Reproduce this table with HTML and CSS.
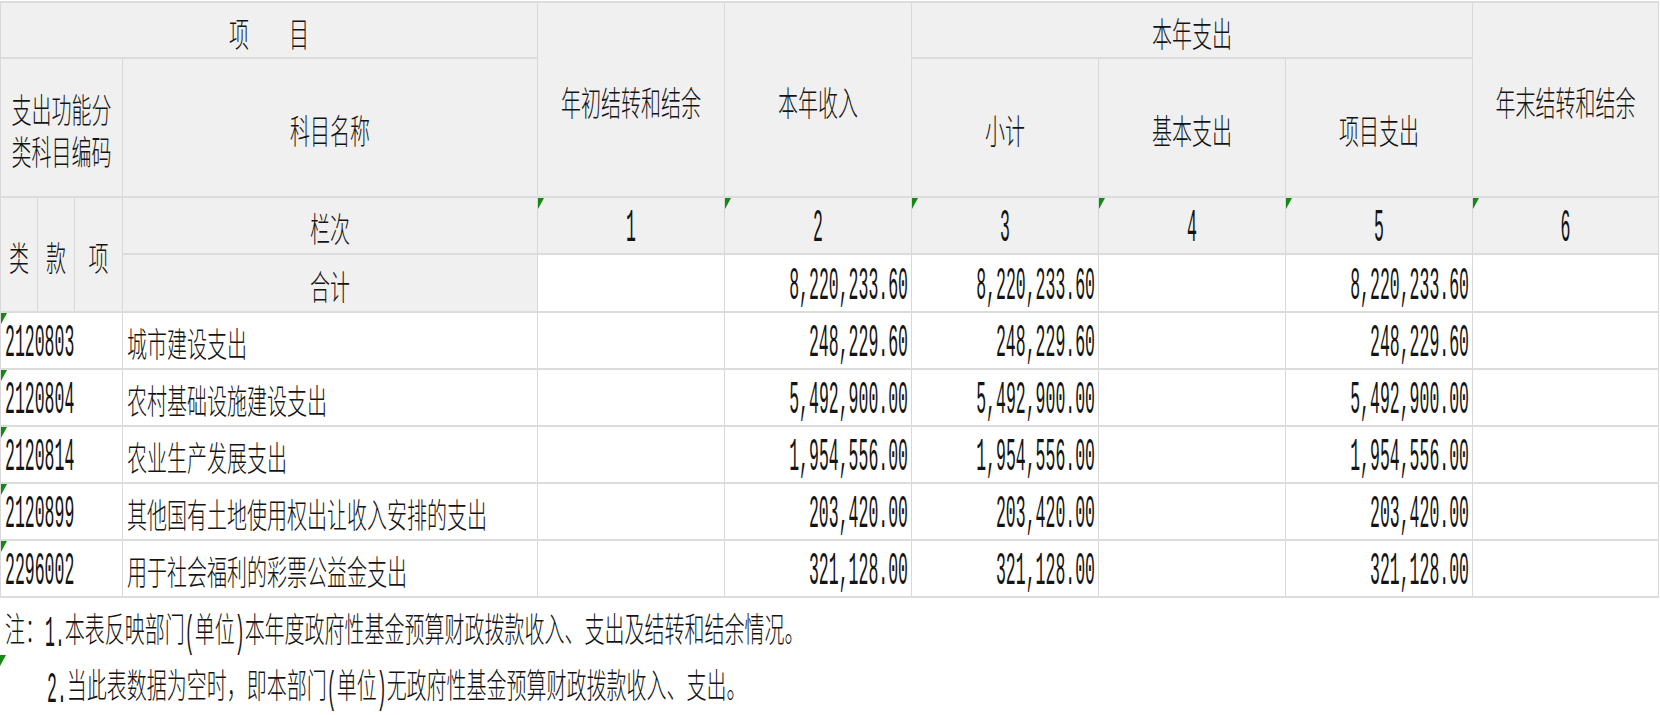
FILE: index.html
```html
<!DOCTYPE html>
<html lang="zh-CN">
<head>
<meta charset="utf-8">
<title>政府性基金预算财政拨款收入支出决算表</title>
<link rel="stylesheet" href="styles.css">
</head>
<body>
<table class="sheet">
  <colgroup>
    <col class="w-lei"><col class="w-kuan"><col class="w-xiang"><col class="w-name">
    <col class="w-val"><col class="w-val"><col class="w-val"><col class="w-val"><col class="w-val"><col class="w-last">
  </colgroup>
  <tbody>
    <tr class="r1">
      <td class="hd" colspan="4"><span class="t">项　　目</span></td>
      <td class="hd" rowspan="2"><span class="t">年初结转和结余</span></td>
      <td class="hd" rowspan="2"><span class="t">本年收入</span></td>
      <td class="hd" colspan="3"><span class="t">本年支出</span></td>
      <td class="hd" rowspan="2"><span class="t">年末结转和结余</span></td>
    </tr>
    <tr class="r2">
      <td class="hd stack" colspan="3"><span class="t">支出功能分</span><br><span class="t">类科目编码</span></td>
      <td class="hd"><span class="t">科目名称</span></td>
      <td class="hd"><span class="t">小计</span></td>
      <td class="hd"><span class="t">基本支出</span></td>
      <td class="hd"><span class="t">项目支出</span></td>
    </tr>
    <tr class="r3">
      <td class="hd" rowspan="2"><span class="t">类</span></td>
      <td class="hd" rowspan="2"><span class="t">款</span></td>
      <td class="hd" rowspan="2"><span class="t">项</span></td>
      <td class="hd"><span class="t">栏次</span></td>
      <td class="hd mk"><span class="n">1</span></td>
      <td class="hd mk"><span class="n">2</span></td>
      <td class="hd mk"><span class="n">3</span></td>
      <td class="hd mk"><span class="n">4</span></td>
      <td class="hd mk"><span class="n">5</span></td>
      <td class="hd mk"><span class="n">6</span></td>
    </tr>
    <tr class="r4">
      <td class="hd"><span class="t">合计</span></td>
      <td></td>
      <td class="num"><span class="n">8,220,233.60</span></td>
      <td class="num"><span class="n">8,220,233.60</span></td>
      <td></td>
      <td class="num"><span class="n">8,220,233.60</span></td>
      <td></td>
    </tr>
    <tr class="rd">
      <td class="code mk" colspan="3"><span class="n">2120803</span></td>
      <td class="name"><span class="t">城市建设支出</span></td>
      <td></td>
      <td class="num"><span class="n">248,229.60</span></td>
      <td class="num"><span class="n">248,229.60</span></td>
      <td></td>
      <td class="num"><span class="n">248,229.60</span></td>
      <td></td>
    </tr>
    <tr class="rd">
      <td class="code mk" colspan="3"><span class="n">2120804</span></td>
      <td class="name"><span class="t">农村基础设施建设支出</span></td>
      <td></td>
      <td class="num"><span class="n">5,492,900.00</span></td>
      <td class="num"><span class="n">5,492,900.00</span></td>
      <td></td>
      <td class="num"><span class="n">5,492,900.00</span></td>
      <td></td>
    </tr>
    <tr class="rd">
      <td class="code mk" colspan="3"><span class="n">2120814</span></td>
      <td class="name"><span class="t">农业生产发展支出</span></td>
      <td></td>
      <td class="num"><span class="n">1,954,556.00</span></td>
      <td class="num"><span class="n">1,954,556.00</span></td>
      <td></td>
      <td class="num"><span class="n">1,954,556.00</span></td>
      <td></td>
    </tr>
    <tr class="rd">
      <td class="code mk" colspan="3"><span class="n">2120899</span></td>
      <td class="name"><span class="t">其他国有土地使用权出让收入安排的支出</span></td>
      <td></td>
      <td class="num"><span class="n">203,420.00</span></td>
      <td class="num"><span class="n">203,420.00</span></td>
      <td></td>
      <td class="num"><span class="n">203,420.00</span></td>
      <td></td>
    </tr>
    <tr class="rd">
      <td class="code mk" colspan="3"><span class="n">2296002</span></td>
      <td class="name"><span class="t">用于社会福利的彩票公益金支出</span></td>
      <td></td>
      <td class="num"><span class="n">321,128.00</span></td>
      <td class="num"><span class="n">321,128.00</span></td>
      <td></td>
      <td class="num"><span class="n">321,128.00</span></td>
      <td></td>
    </tr>
  </tbody>
</table>
<div class="notes">
  <div class="note note1"><span class="t">注：<span class="h">1.</span>本表反映部门<span class="h">(</span>单位<span class="h">)</span>本年度政府性基金预算财政拨款收入、支出及结转和结余情况。</span></div>
  <div class="note note2 mk"><span class="t"><span class="h">2.</span>当此表数据为空时，即本部门<span class="h">(</span>单位<span class="h">)</span>无政府性基金预算财政拨款收入、支出。</span></div>
</div>
</body>
</html>
```
FILE: styles.css
```css
* { box-sizing: border-box; }
html, body { margin: 0; padding: 0; background: #ffffff; }
body {
  font-family: "Noto Sans CJK SC", "Noto Sans", sans-serif;
  font-size: 20px;
  font-weight: 300;
  color: #141414;
  overflow: hidden;
}

.sheet {
  border-collapse: collapse;
  table-layout: fixed;
  width: 1658px;
  margin-top: 1px;
}
.w-lei { width: 37px; }
.w-kuan { width: 37px; }
.w-xiang { width: 48px; }
.w-name { width: 415px; }
.w-val { width: 187px; }
.w-last { width: 186px; }

.sheet td {
  border-left: 1px solid #d8d8d8;
  border-right: 1px solid #d8d8d8;
  border-top: 2px solid #dcdcdc;
  border-bottom: 2px solid #dcdcdc;
  padding: 0 4px;
  text-align: center;
  vertical-align: middle;
  white-space: nowrap;
  position: relative;
  background: #ffffff;
}
.sheet td.hd { background: #f0f0f0; }
.sheet td.stack { line-height: 42px; }

.r1 td { height: 56px; }
.r2 td { height: 139px; }
.r3 td { height: 57px; }
.r4 td { height: 58px; }
.rd td { height: 57px; }

.t {
  display: inline-block;
  line-height: 24px;
  vertical-align: middle;
  transform: scaleY(1.7);
}
.n {
  display: inline-block;
  font-family: "Liberation Mono", monospace;
  font-size: 16.5px;
  font-weight: 400;
  line-height: 20px;
  transform: scaleY(2.75);
}
.h {
  display: inline-block;
  font-family: "Liberation Mono", monospace;
  font-size: 16.5px;
  font-weight: 400;
  transform: scaleY(1.6);
}

.sheet td.num { text-align: right; padding-right: 3px; }
.sheet td.code { text-align: left; padding-left: 4px; }
.sheet td.name { text-align: left; padding-left: 4px; }

.mk::before {
  content: "";
  position: absolute;
  left: 0;
  top: 0;
  width: 0;
  height: 0;
  border-top: 11px solid #138a13;
  border-right: 6px solid transparent;
}

.notes {
  display: flex;
  flex-direction: column;
}
.note {
  height: 57px;
  display: flex;
  align-items: center;
  white-space: nowrap;
  position: relative;
}
.note1 { padding-left: 5px; padding-top: 10px; }
.note2 { padding-left: 47px; padding-top: 8px; }
```
